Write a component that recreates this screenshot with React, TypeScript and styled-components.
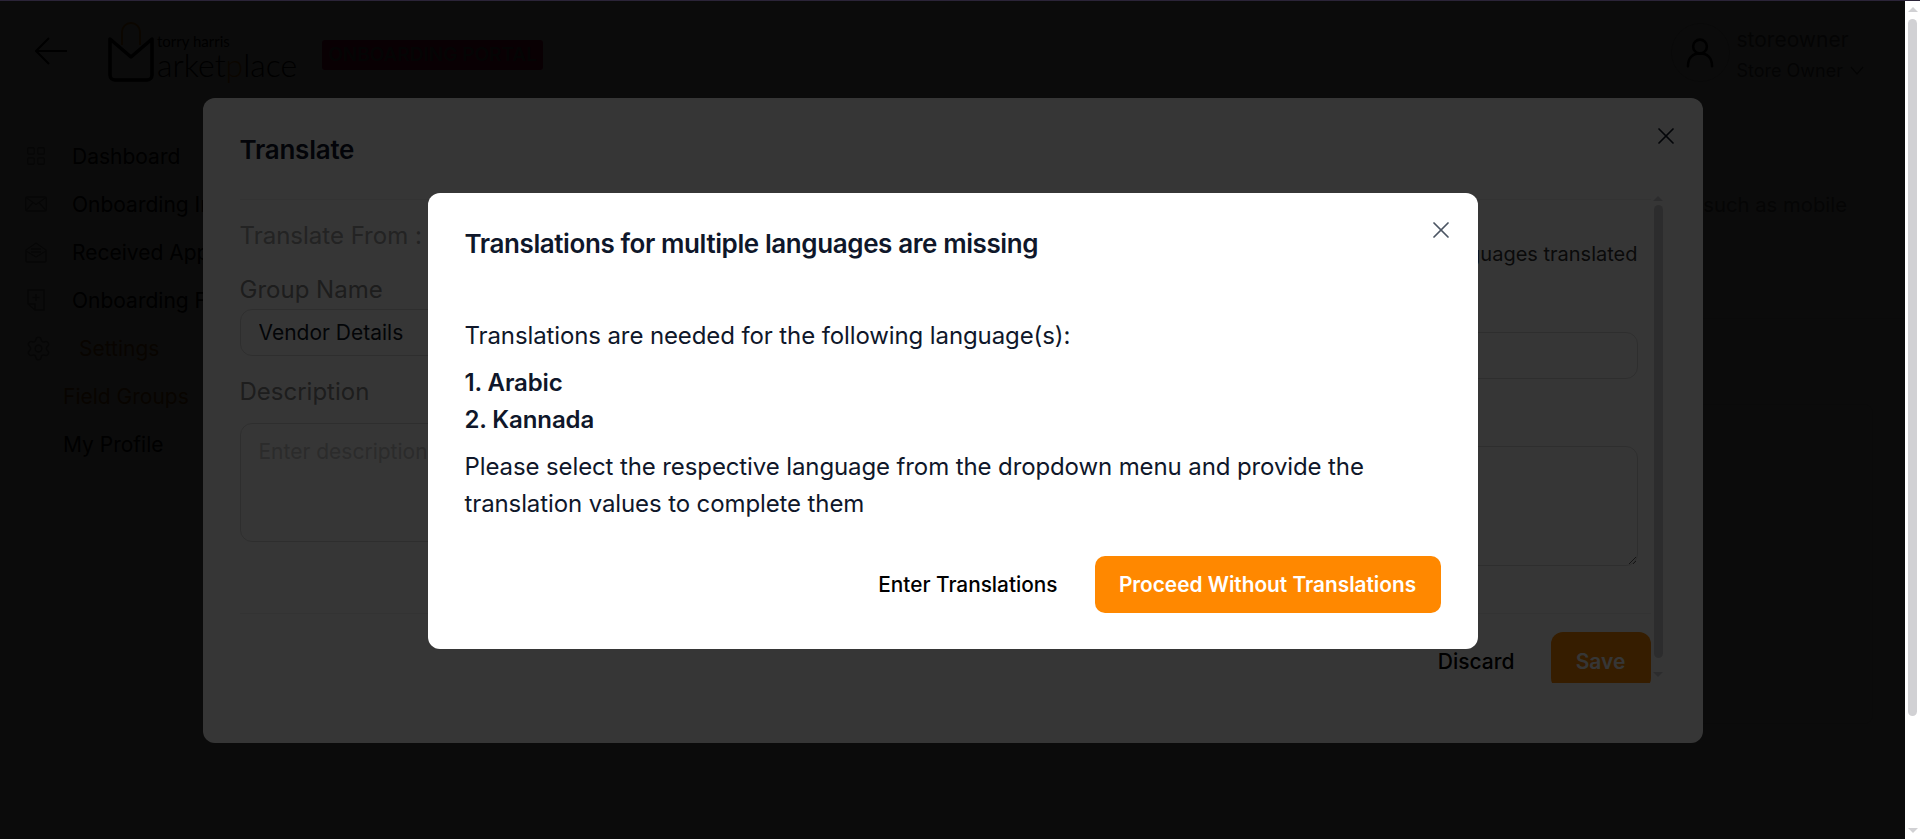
import React from 'react'
import styled, { createGlobalStyle } from 'styled-components'
import { LayoutGrid, Settings, X } from 'lucide-react'

const GlobalStyle = createGlobalStyle`
  html, body {
    margin: 0;
    height: 100%;
    overflow: hidden;
    background: #fff;
  }
  * {
    box-sizing: border-box;
  }
  body {
    font-family: Inter, "Liberation Sans", sans-serif;
    color: #000;
  }
`

const Shell = styled.div`
  display: flex;
  flex-direction: column;
  height: 839px;
`

const TopLine = styled.div`
  height: 1px;
  flex: none;
  background: #2b2438;
`

const Window = styled.div`
  display: flex;
  flex: 1;
  min-height: 0;
`

const Viewport = styled.div`
  position: relative;
  width: 1905px;
  flex: none;
  overflow: hidden;
`

/* page behind the modals */
const Header = styled.header`
  display: flex;
  align-items: center;
  height: 109px;
  padding: 0 41px 0 35px;
`

const BackIcon = styled.svg`
  width: 32px;
  height: 28px;
  margin-top: -10px;
  flex: none;
`

const Logo = styled.div`
  display: flex;
  align-items: flex-end;
  margin-left: 41px;
  height: 62px;
  margin-top: -8px;
`

const LogoBag = styled.svg`
  width: 46px;
  height: 62px;
  flex: none;
`

const LogoWords = styled.div`
  display: flex;
  flex-direction: column;
  width: 140px;
  margin-left: 3px;
  margin-bottom: 3px;
`

const LogoTop = styled.span`
  font-family: Lato, sans-serif;
  font-size: 15px;
  line-height: 12px;
  margin-bottom: 3px;
`

const LogoMain = styled.span`
  font-family: Lato, sans-serif;
  font-weight: 300;
  font-size: 32px;
  line-height: 30px;
  white-space: nowrap;

  b {
    font-weight: 300;
    color: #ff8800;
  }
`

const Badge = styled.span`
  margin-left: 25px;
  margin-top: -2px;
  width: 221px;
  height: 30px;
  border-radius: 3px;
  background: #d00050;
  color: #666;
  font-size: 19px;
  font-weight: 600;
  line-height: 30px;
  text-align: center;
  white-space: nowrap;
`

const UserBlock = styled.div`
  display: flex;
  align-items: center;
  gap: 7px;
  margin-left: auto;
  margin-top: -1px;
`

const Avatar = styled.div`
  display: flex;
  align-items: center;
  justify-content: center;
  width: 59px;
  height: 59px;
  margin-bottom: 5px;
  border-radius: 50%;
  border: 1px solid #ccc;
`

const UserText = styled.div`
  display: flex;
  flex-direction: column;
  gap: 9px;
  font-size: 21px;
  line-height: 22px;
  color: #666;
`

const UserRole = styled.span`
  display: flex;
  align-items: center;
  gap: 7px;
  font-size: 18px;
`

const Body = styled.div`
  display: flex;
`

const Sidebar = styled.nav`
  width: 240px;
  flex: none;
  padding: 22px 0 0 25px;
`

const NavRow = styled.div<{ $gap?: number; $indent?: number; $active?: boolean }>`
  display: flex;
  align-items: center;
  gap: ${(p) => p.$gap ?? 25}px;
  height: 48px;
  padding-left: ${(p) => p.$indent ?? 0}px;
  font-size: 21px;
  color: ${(p) => (p.$active ? '#b86400' : '#000')};
  white-space: nowrap;
`

const NavIcon = styled.svg`
  width: 22px;
  height: 24px;
  flex: none;
`

const Main = styled.main`
  flex: 1;
  min-width: 0;
  display: flex;
  flex-direction: column;
  align-items: stretch;
`

const MainIntro = styled.div`
  height: 209px;
  padding: 81px 58px 0 0;
  border-bottom: 1px solid #ddd;
  font-size: 20.3px;
  line-height: 28px;
  text-align: right;
  color: #777;
`

const Card = styled.div`
  align-self: flex-end;
  width: 800px;
  height: 320px;
  margin: 85px 32px 0 0;
  border: 1px solid #ddd;
  border-radius: 8px;
`

/* modal layers */
const Overlay = styled.div<{ $top: number }>`
  position: absolute;
  inset: 0;
  display: flex;
  justify-content: center;
  align-items: flex-start;
  padding-top: ${(p) => p.$top}px;
  background: rgba(0, 0, 0, 0.79);
`

const TranslateModal = styled.section`
  width: 1500px;
  height: 645px;
  border-radius: 12px;
  background: #fff;
  display: flex;
  flex-direction: column;
`

const TranslateHeader = styled.div`
  display: flex;
  justify-content: space-between;
  height: 92px;
  padding: 35px 27px 0 37px;
`

const TranslateTitle = styled.h2`
  margin: 0;
  font-size: 26px;
  font-weight: 600;
  line-height: 34px;
  letter-spacing: -0.25px;
  color: #0f172a;
`

const CloseButton = styled.button<{ $color: string; $top: number; $right: number }>`
  display: flex;
  align-items: center;
  justify-content: center;
  width: 30px;
  height: 30px;
  margin-top: ${(p) => p.$top}px;
  margin-right: ${(p) => p.$right}px;
  padding: 0;
  border: 0;
  background: none;
  color: ${(p) => p.$color};
`

const ScrollRow = styled.div`
  display: flex;
  height: 493px;
  margin-left: 37px;
  margin-right: 37px;
`

const ScrollContent = styled.div`
  flex: 1;
  min-width: 0;
  overflow: hidden;
  padding-top: 9px;
`

const FormGrid = styled.div`
  display: grid;
  grid-template-columns: 1fr 1fr;
  gap: 24px;
  height: 415px;
  padding-right: 13px;
  border-top: 1px solid #f2f2f2;
  border-bottom: 1px solid #f2f2f2;
`

const Column = styled.div<{ $top: number }>`
  display: flex;
  flex-direction: column;
  min-width: 0;
  padding-top: ${(p) => p.$top}px;
`

const FromLabel = styled.div`
  font-size: 24px;
  line-height: 28px;
  color: #a3a3a3;
`

const LanguagesNote = styled.div`
  font-size: 20px;
  line-height: 28px;
  color: #333;
  text-align: right;
`

const FieldLabel = styled.label<{ $top: number; $bottom: number }>`
  display: block;
  margin: ${(p) => p.$top}px 0 ${(p) => p.$bottom}px;
  font-size: 24px;
  line-height: 28px;
  color: #8a8a8a;
`

const TextInput = styled.input`
  display: block;
  width: 100%;
  height: 47px;
  padding: 0 18px;
  border: 1px solid #d9d9d9;
  border-radius: 12px;
  background: transparent;
  font: 21px Inter, sans-serif;
  color: #111827;
  outline: none;
`

const TextBlock = styled.textarea<{ $height: number }>`
  display: block;
  width: 100%;
  height: ${(p) => p.$height}px;
  padding: 14px 18px;
  border: 1px solid #d9d9d9;
  border-radius: 12px;
  background: transparent;
  font: 21px Inter, sans-serif;
  line-height: 28px;
  color: #111827;
  resize: vertical;
  outline: none;

  &::placeholder {
    color: #c9c9c9;
  }
`

const FormFooter = styled.div`
  display: flex;
  justify-content: flex-end;
  align-items: flex-start;
  gap: 36px;
  padding-top: 18px;
`

const DiscardButton = styled.button`
  height: 58px;
  padding: 0;
  border: 0;
  background: none;
  font: 500 21px Inter, sans-serif;
  color: #000;
`

const SaveButton = styled.button`
  width: 100px;
  height: 58px;
  flex: none;
  border: 0;
  border-radius: 12px;
  background: #ff8800;
  color: #fff;
  font: 600 21px Inter, sans-serif;
`

const ScrollTrack = styled.div`
  display: flex;
  flex-direction: column;
  justify-content: space-between;
  align-items: center;
  width: 15px;
  flex: none;
  height: 100%;
  padding: 6px 0;
  position: relative;
`

const Thumb = styled.div<{ $height: number; $top: number }>`
  position: absolute;
  top: ${(p) => p.$top}px;
  left: 3px;
  width: 9px;
  height: ${(p) => p.$height}px;
  border-radius: 5px;
  background: #d1d1d4;
`

const Arrow = styled.span<{ $down?: boolean }>`
  width: 0;
  height: 0;
  border-left: 5px solid transparent;
  border-right: 5px solid transparent;
  border-${(p) => (p.$down ? 'top' : 'bottom')}: 5px solid #d1d1d4;
`

const PageScrollbar = styled.div`
  width: 15px;
  flex: none;
  background: #fff;
`

/* warning dialog */
const WarningModal = styled.section`
  width: 1050px;
  height: 456px;
  padding: 35px 37px 0;
  border-radius: 12px;
  background: #fff;
`

const WarningHeader = styled.div`
  display: flex;
  justify-content: space-between;
`

const WarningTitle = styled.h2`
  margin: 0;
  font-size: 26px;
  font-weight: 600;
  line-height: 32px;
  letter-spacing: -0.4px;
  color: #0f172a;
`

const WarningText = styled.p<{ $top: number }>`
  margin: ${(p) => p.$top}px 0 0;
  font-size: 24px;
  line-height: 37px;
  letter-spacing: -0.11px;
  color: #0f172a;
`

const LanguageList = styled.ol`
  margin: 10px 0 0;
  padding: 0;
  list-style: none;
  font-size: 24px;
  font-weight: 600;
  line-height: 37px;
  letter-spacing: -0.11px;
  color: #0f172a;
`

const WarningActions = styled.div`
  display: flex;
  justify-content: flex-end;
  align-items: center;
  gap: 37px;
  margin-top: 34px;
`

const TextButton = styled.button`
  padding: 0;
  border: 0;
  background: none;
  font: 500 20.8px Inter, sans-serif;
  color: #000;
`

const PrimaryButton = styled.button`
  width: 346px;
  height: 57px;
  padding: 0;
  border: 0;
  border-radius: 10px;
  background: #ff8800;
  font: 600 20.8px Inter, sans-serif;
  color: #fff;
`

const MailIcon = () => (
  <NavIcon viewBox="0 0 22 24" fill="none" stroke="#888" strokeWidth="1.4">
    <rect x="0.7" y="5" width="20.6" height="14" rx="1.5" />
    <path d="M1 5.5l10 7 10-7M1 18.5l7-8M21 18.5l-7-8" />
  </NavIcon>
)

const OpenMailIcon = () => (
  <NavIcon viewBox="0 0 22 24" fill="none" stroke="#888" strokeWidth="1.4">
    <path d="M1 10l10-7 10 7v11a1 1 0 0 1-1 1H2a1 1 0 0 1-1-1z" />
    <path d="M1 11l10 6 10-6M6 9h10M6 12h10" />
  </NavIcon>
)

const FormIcon = () => (
  <NavIcon viewBox="0 0 22 24" fill="none" stroke="#888" strokeWidth="1.4">
    <path d="M3 2h16v20h-9l-7-6zM3 16h7v6M11 6v7M7.5 9.5h7" />
  </NavIcon>
)

const App = () => {
  return (
    <Shell>
      <GlobalStyle />
      <TopLine />
      <Window>
        <Viewport>
          <Header>
            <BackIcon viewBox="0 0 32 28" fill="none" stroke="#000" strokeWidth="2">
              <path d="M32 14H1M14 1L1 14l13 13" />
            </BackIcon>
            <Logo>
              <LogoBag viewBox="0 0 46 62" fill="none">
                <path d="M14 24V11a9 9 0 0 1 18 0v13" stroke="#ff8800" strokeWidth="2" />
                <path
                  d="M2 18v36a5 5 0 0 0 5 5h32a5 5 0 0 0 5-5V18L23 36z"
                  stroke="#000"
                  strokeWidth="3.5"
                  strokeLinejoin="round"
                />
              </LogoBag>
              <LogoWords>
                <LogoTop>torry harris</LogoTop>
                <LogoMain>
                  arket<b>p</b>lace
                </LogoMain>
              </LogoWords>
            </Logo>
            <Badge>ONBOARDING PORTAL</Badge>
            <UserBlock>
              <Avatar>
                <svg width="28" height="31" viewBox="0 0 32 36" fill="none" stroke="#000" strokeWidth="3">
                  <circle cx="16" cy="11" r="8" />
                  <path d="M2 34c0-9 5-15 14-15s14 6 14 15" strokeLinecap="round" />
                </svg>
              </Avatar>
              <UserText>
                <span>storeowner</span>
                <UserRole>
                  Store Owner
                  <svg width="14" height="10" viewBox="0 0 14 10" fill="none" stroke="#666" strokeWidth="1.4">
                    <path d="M1 1l6 7 6-7" />
                  </svg>
                </UserRole>
              </UserText>
            </UserBlock>
          </Header>
          <Body>
            <Sidebar>
              <NavRow>
                <LayoutGrid size={22} color="#888" strokeWidth={1.4} />
                Dashboard
              </NavRow>
              <NavRow>
                <MailIcon />
                Onboarding Invites
              </NavRow>
              <NavRow>
                <OpenMailIcon />
                Received Applications
              </NavRow>
              <NavRow>
                <FormIcon />
                Onboarding Forms
              </NavRow>
              <NavRow $gap={27} $active>
                <Settings size={27} color="#888" strokeWidth={1.4} />
                Settings
              </NavRow>
              <NavRow $indent={38} $active>
                Field Groups
              </NavRow>
              <NavRow $indent={38}>My Profile</NavRow>
            </Sidebar>
            <Main>
              <MainIntro>Add the details vendors share during onboarding, such as mobile</MainIntro>
              <Card />
            </Main>
          </Body>

          <Overlay $top={97}>
            <TranslateModal>
              <TranslateHeader>
                <TranslateTitle>Translate</TranslateTitle>
                <CloseButton $color="#111827" $top={-12} $right={-5}>
                  <X size={28} strokeWidth={1.5} />
                </CloseButton>
              </TranslateHeader>
              <ScrollRow>
                <ScrollContent>
                  <FormGrid>
                    <Column $top={22}>
                      <FromLabel>Translate From :</FromLabel>
                      <FieldLabel $top={26} $bottom={5}>
                        Group Name
                      </FieldLabel>
                      <TextInput value="Vendor Details" readOnly />
                      <FieldLabel $top={22} $bottom={17}>
                        Description
                      </FieldLabel>
                      <TextBlock $height={119} placeholder="Enter description" />
                    </Column>
                    <Column $top={40}>
                      <LanguagesNote>0 of 2 languages translated</LanguagesNote>
                      <FieldLabel $top={36} $bottom={0}>
                        Group Name
                      </FieldLabel>
                      <TextInput readOnly />
                      <FieldLabel $top={22} $bottom={17}>
                        Description
                      </FieldLabel>
                      <TextBlock $height={120} />
                    </Column>
                  </FormGrid>
                  <FormFooter>
                    <DiscardButton>Discard</DiscardButton>
                    <SaveButton>Save</SaveButton>
                  </FormFooter>
                </ScrollContent>
                <ScrollTrack>
                  <Arrow />
                  <Thumb $top={15} $height={453} />
                  <Arrow $down />
                </ScrollTrack>
              </ScrollRow>
            </TranslateModal>
          </Overlay>

          <Overlay $top={192}>
            <WarningModal>
              <WarningHeader>
                <WarningTitle>Translations for multiple languages are missing</WarningTitle>
                <CloseButton $color="#4b5563" $top={-13} $right={-15}>
                  <X size={28} strokeWidth={1.5} />
                </CloseButton>
              </WarningHeader>
              <WarningText $top={57}>Translations are needed for the following language(s):</WarningText>
              <LanguageList>
                <li>1. Arabic</li>
                <li>2. Kannada</li>
              </LanguageList>
              <WarningText $top={10}>
                Please select the respective language from the dropdown menu and provide the translation values to
                complete them
              </WarningText>
              <WarningActions>
                <TextButton>Enter Translations</TextButton>
                <PrimaryButton>Proceed Without Translations</PrimaryButton>
              </WarningActions>
            </WarningModal>
          </Overlay>
        </Viewport>
        <PageScrollbar>
          <ScrollTrack>
            <Arrow />
            <Thumb $top={18} $height={697} />
            <Arrow $down />
          </ScrollTrack>
        </PageScrollbar>
      </Window>
    </Shell>
  )
}

export default App
